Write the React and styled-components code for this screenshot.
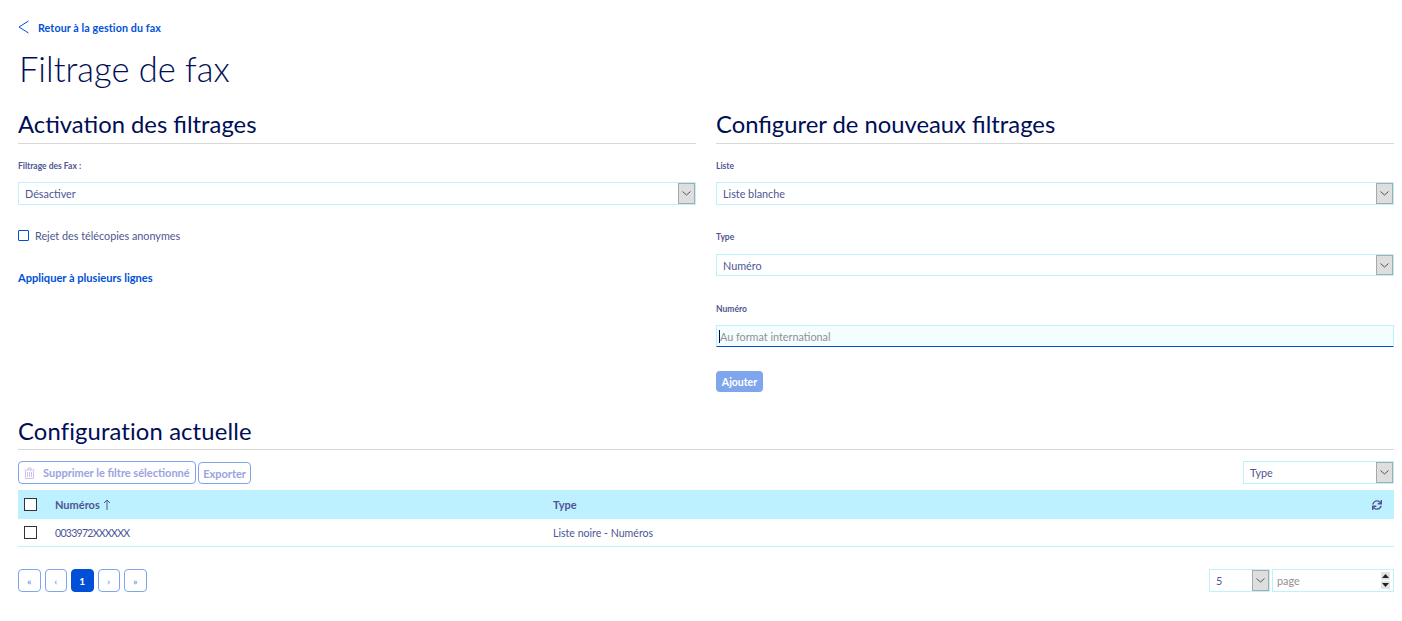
import React from 'react'
import styled, { createGlobalStyle } from 'styled-components'
import { FaSync } from 'react-icons/fa'

const GlobalStyle = createGlobalStyle`
html, body {
  margin: 0;
  padding: 0;
  background: #fff;
}
body {
  font-family: Lato, "Noto Sans", sans-serif;
  font-size: 10.8px;
  color: #4d5693;
}
`

const Page = styled.div`
  padding: 18px 8px 0 18px;
`

const BackLink = styled.a`
  display: flex;
  align-items: center;
  gap: 9px;
  height: 18px;
  color: #0050d7;
  font-size: 10.7px;
  font-weight: 700;
  letter-spacing: 0.1px;
`

const Title = styled.h1`
  margin: 9px 0 0 1px;
  height: 48px;
  font-size: 34.5px;
  line-height: 48px;
  font-weight: 300;
  color: #000e56;
`

const Columns = styled.div`
  display: grid;
  grid-template-columns: 678px 678px;
  column-gap: 20px;
  margin-top: 17px;
  height: 307px;
`

const Heading = styled.h2`
  margin: 0;
  height: ${(p) => p.$height}px;
  line-height: 28px;
  font-size: 23.8px;
  font-weight: 400;
  letter-spacing: ${(p) => p.$spacing || 0}px;
  color: #000e56;
  border-bottom: 1px solid #d8d8d8;
`

const FieldLabel = styled.label`
  display: block;
  margin-top: ${(p) => p.$top}px;
  height: 12px;
  line-height: 12px;
  font-size: 8.5px;
  font-weight: 700;
  color: #4d5693;
`

const SelectBox = styled.div`
  display: flex;
  align-items: center;
  justify-content: space-between;
  box-sizing: border-box;
  width: ${(p) => p.$width || '100%'};
  height: ${(p) => p.$height || 23}px;
  margin-top: ${(p) => p.$top || 0}px;
  padding-left: 6px;
  border: 1px solid #bef1ff;
  background: #fff;
  color: #4d5693;
`

const Arrow = styled.span`
  display: flex;
  align-items: center;
  justify-content: center;
  box-sizing: border-box;
  align-self: stretch;
  width: 17px;
  background: #dedede;
  border: 1px solid #a9a9a9;
  color: #555;
`

const Chevron = () => (
  <svg width="9" height="5" viewBox="0 0 9 5" fill="none">
    <path d="M0.5 0.5L4.5 4L8.5 0.5" stroke="currentColor" strokeWidth="1" />
  </svg>
)

const Select = ({ value, ...rest }) => (
  <SelectBox {...rest}>
    {value}
    <Arrow>
      <Chevron />
    </Arrow>
  </SelectBox>
)

const CheckRow = styled.label`
  display: flex;
  align-items: center;
  gap: 6px;
  margin-top: 24px;
  height: 13px;
`

const BlueCheck = styled.span`
  box-sizing: border-box;
  width: 11px;
  height: 11px;
  border: 1px solid #0050d7;
  border-radius: 1px;
`

const ApplyLink = styled.a`
  display: block;
  margin-top: 29px;
  height: 14px;
  line-height: 14px;
  font-size: 11.1px;
  font-weight: 700;
  color: #0050d7;
`

const InputWrap = styled.div`
  position: relative;
  margin-top: 10px;
  height: 22px;
  &::before {
    content: '';
    position: absolute;
    left: 3px;
    top: 5px;
    width: 1px;
    height: 13px;
    background: #000e56;
  }
`

const TextInput = styled.input`
  display: block;
  box-sizing: border-box;
  width: 100%;
  height: 100%;
  padding: 0 0 0 3px;
  border: 1px solid #bef1ff;
  border-bottom: 1px solid #0050d7;
  outline: none;
  background: #f5feff;
  font: inherit;
  &::placeholder {
    color: #8f9094;
    opacity: 1;
  }
`

const AddButton = styled.button`
  display: block;
  margin-top: 24px;
  width: 47px;
  height: 21px;
  padding: 0;
  border: 0;
  border-radius: 4px;
  background: #7fa6ec;
  color: #fff;
  font: inherit;
  font-size: 10.5px;
  font-weight: 700;
`

const Toolbar = styled.div`
  display: flex;
  align-items: flex-start;
  gap: 2px;
  margin-top: 11px;
  height: 23px;
`

const GhostButton = styled.button`
  display: flex;
  align-items: center;
  gap: 8px;
  box-sizing: border-box;
  height: ${(p) => p.$height}px;
  margin-top: ${(p) => p.$top || 0}px;
  padding: 0 ${(p) => p.$pad || 5}px;
  border: 1px solid #7fa6ec;
  border-radius: 4px;
  background: #fff;
  color: #9aa3e0;
  font: inherit;
  font-size: 11px;
  font-weight: 700;
`

const ToolbarEnd = styled.div`
  margin-left: auto;
`

const Table = styled.div`
  margin-top: 6px;
`

const Row = styled.div`
  display: grid;
  grid-template-columns: 37px 498px 1fr auto;
  align-items: center;
  height: ${(p) => p.$height}px;
  background: ${(p) => (p.$head ? '#bef1ff' : '#fff')};
  border-bottom: ${(p) => (p.$head ? '0' : '1px solid #bef1ff')};
  font-size: ${(p) => (p.$head ? 11 : 10.6)}px;
  font-weight: ${(p) => (p.$head ? 700 : 400)};
`

const BlackCheck = styled.span`
  box-sizing: border-box;
  display: block;
  width: 13px;
  height: 13px;
  margin-left: 6px;
  border: 1px solid #333;
  background: ${(p) => (p.$head ? '#fff' : 'transparent')};
`

const SortCell = styled.span`
  display: flex;
  align-items: center;
  gap: 3px;
`

const NumberCell = styled.span`
  font-size: 10.5px;
  letter-spacing: -0.7px;
`

const RefreshCell = styled.span`
  display: flex;
  padding-right: 12px;
  color: #4d5693;
  font-size: 10px;
`

const Footer = styled.div`
  display: flex;
  align-items: center;
  justify-content: space-between;
  margin-top: 22px;
  height: 23px;
`

const Pagination = styled.div`
  display: flex;
  gap: 4px;
`

const PageButton = styled.button`
  box-sizing: border-box;
  width: 22.5px;
  height: 23px;
  padding: 0;
  border: 1px solid ${(p) => (p.$active ? '#0050d7' : '#7fa6ec')};
  border-radius: 4px;
  background: ${(p) => (p.$active ? '#0050d7' : '#fff')};
  color: ${(p) => (p.$active ? '#fff' : '#7fa6ec')};
  font: inherit;
  font-size: 10px;
  font-weight: 700;
`

const PageTools = styled.div`
  display: flex;
  gap: 2px;
`

const PageInput = styled.div`
  display: flex;
  align-items: center;
  justify-content: space-between;
  box-sizing: border-box;
  width: 122px;
  height: 23px;
  padding: 0 3px 0 4px;
  border: 1px solid #bef1ff;
  color: #8f9094;
`

const Spinner = styled.span`
  display: flex;
  flex-direction: column;
  gap: 1px;
  width: 9px;
  color: #222;
`

const SpinnerCell = styled.span`
  display: flex;
  align-items: center;
  justify-content: center;
  height: 8px;
  background: #e4e4e4;
`

const Triangle = ({ down }) => (
  <svg width="7" height="4" viewBox="0 0 7 4">
    <path d={down ? 'M0 0H7L3.5 4Z' : 'M3.5 0L7 4H0Z'} fill="currentColor" />
  </svg>
)

const BackChevron = () => (
  <svg width="11" height="14" viewBox="0 0 11 14" fill="none">
    <path d="M10.5 1L1 7L10.5 13" stroke="#0050d7" strokeWidth="1" />
  </svg>
)

const Trash = () => (
  <svg width="11" height="12" viewBox="0 0 11 12" fill="none" stroke="#c9c3ee" strokeWidth="1">
    <path d="M0.5 3H10.5M4 3V1H7V3M1.5 4V11.5H9.5V4" />
    <path d="M3.5 5V10M5.5 5V10M7.5 5V10" />
  </svg>
)

const SortArrow = () => (
  <svg width="8" height="11" viewBox="0 0 8 11" fill="none">
    <path d="M4 11V1M1 4L4 1L7 4" stroke="#4d5693" strokeWidth="1" />
  </svg>
)

export default function App() {
  return (
    <Page>
      <GlobalStyle />
      <BackLink>
        <BackChevron />
        Retour à la gestion du fax
      </BackLink>
      <Title>Filtrage de fax</Title>
      <Columns>
        <section>
          <Heading $height={33}>Activation des filtrages</Heading>
          <FieldLabel $top={16}>Filtrage des Fax :</FieldLabel>
          <Select value="Désactiver" $top={10} />
          <CheckRow>
            <BlueCheck />
            Rejet des télécopies anonymes
          </CheckRow>
          <ApplyLink>Appliquer à plusieurs lignes</ApplyLink>
        </section>
        <section>
          <Heading $height={33}>Configurer de nouveaux filtrages</Heading>
          <FieldLabel $top={16}>Liste</FieldLabel>
          <Select value="Liste blanche" $top={10} />
          <FieldLabel $top={26}>Type</FieldLabel>
          <Select value="Numéro" $top={11} $height={22} />
          <FieldLabel $top={27}>Numéro</FieldLabel>
          <InputWrap>
            <TextInput placeholder="Au format international" />
          </InputWrap>
          <AddButton>Ajouter</AddButton>
        </section>
      </Columns>
      <Heading $height={32} $spacing={0.14}>
        Configuration actuelle
      </Heading>
      <Toolbar>
        <GhostButton $height={23}>
          <Trash />
          Supprimer le filtre sélectionné
        </GhostButton>
        <GhostButton $height={22} $top={1} $pad={4.5}>
          Exporter
        </GhostButton>
        <ToolbarEnd>
          <Select value="Type" $width="151px" />
        </ToolbarEnd>
      </Toolbar>
      <Table>
        <Row $head $height={29}>
          <BlackCheck $head />
          <SortCell>
            Numéros <SortArrow />
          </SortCell>
          <span>Type</span>
          <RefreshCell>
            <FaSync />
          </RefreshCell>
        </Row>
        <Row $height={27}>
          <BlackCheck />
          <NumberCell>0033972XXXXXX</NumberCell>
          <span>Liste noire - Numéros</span>
        </Row>
      </Table>
      <Footer>
        <Pagination>
          <PageButton>«</PageButton>
          <PageButton>‹</PageButton>
          <PageButton $active>1</PageButton>
          <PageButton>›</PageButton>
          <PageButton>»</PageButton>
        </Pagination>
        <PageTools>
          <Select value="5" $width="61px" />
          <PageInput>
            page
            <Spinner>
              <SpinnerCell>
                <Triangle />
              </SpinnerCell>
              <SpinnerCell>
                <Triangle down />
              </SpinnerCell>
            </Spinner>
          </PageInput>
        </PageTools>
      </Footer>
    </Page>
  )
}
